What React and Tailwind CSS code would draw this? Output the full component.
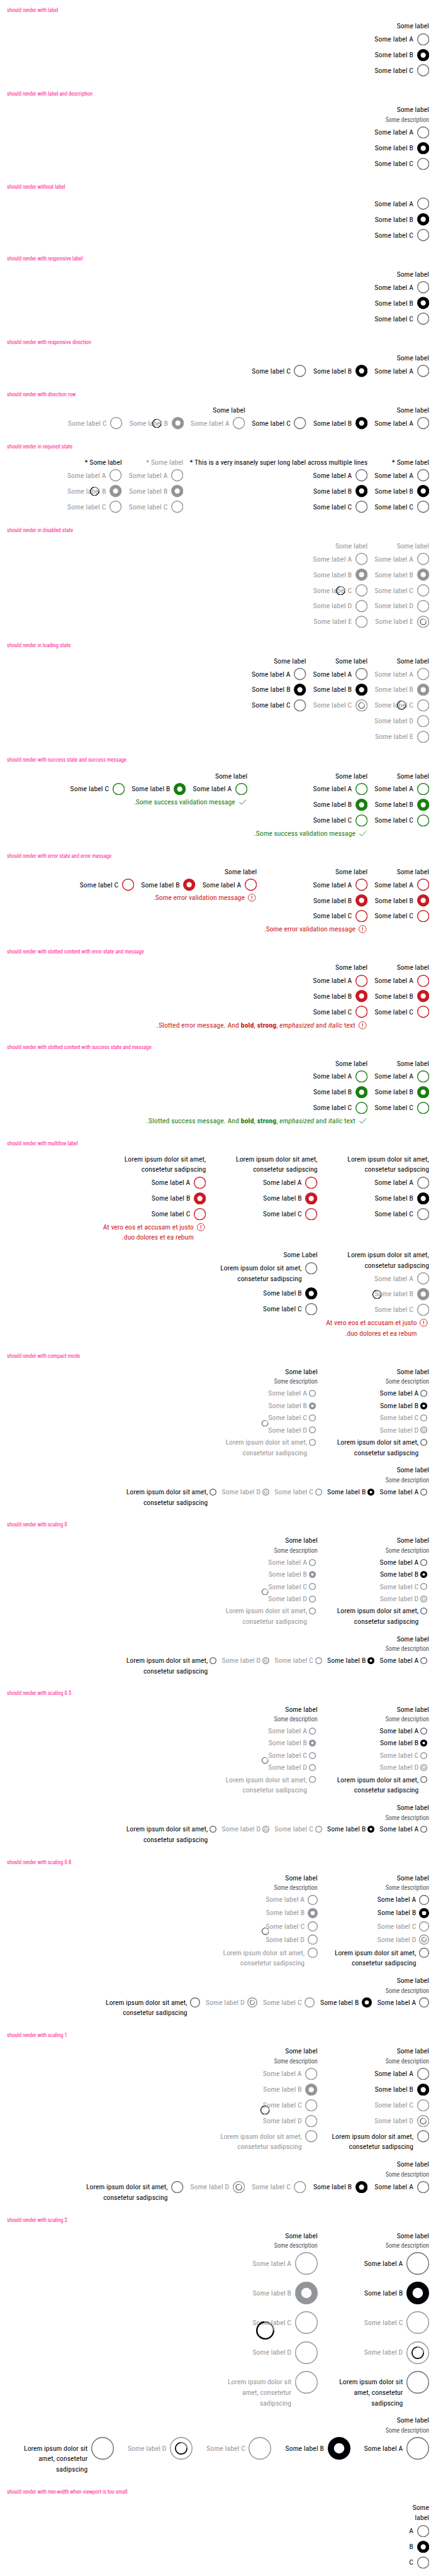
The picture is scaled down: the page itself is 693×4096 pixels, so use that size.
import React from "react";

const LOREM = "Lorem ipsum dolor sit amet, consetetur sadipscing";
const GRAY = "#949598";

/* Geometry of each scaling step; diameter is in design pixels. */
const SCALES = {
  compact: { d: 16, cell: "size-6", svg: "size-4", inner: "gap-0", pad: "", col: "gap-1", row: "gap-2", head: "gap-1", spin: 15, spinCls: "size-[10.4px]" },
  small: { d: 16, cell: "size-6", svg: "size-4", inner: "gap-0", pad: "", col: "gap-1", row: "gap-2", head: "gap-[2.5px]", spin: 15, spinCls: "size-[10.4px]" },
  medium: { d: 23.2, cell: "h-6 w-[16.07px]", svg: "size-[16.07px]", inner: "gap-[4.43px]", pad: "", col: "gap-[4.43px]", row: "gap-[8.87px]", head: "gap-1", spin: 16.8, spinCls: "size-[11.6px]" },
  base: { d: 28, cell: "size-7", svg: "size-7", inner: "gap-2", pad: "pt-0.5", col: "gap-2", row: "gap-4", head: "gap-1", spin: 21, spinCls: "size-[14.55px]" },
  large: { d: 52, cell: "size-13", svg: "size-13", inner: "gap-2", pad: "pt-3.5", col: "gap-4", row: "gap-8", head: "gap-1", spin: 42, spinCls: "size-[29.1px]" },
};

function Arcs({ c, r, w }) {
  const sx = c - r * 0.12;
  const sy = c - r * 0.993;
  return (
    <g fill="none" strokeWidth={w}>
      <path d={`M${sx} ${sy}A${r} ${r} 0 0 1 ${c + r} ${c}`} stroke="#6b6d70" />
      <path d={`M${c + r} ${c}A${r} ${r} 0 1 1 ${sx} ${sy}`} stroke="#010205" />
    </g>
  );
}

function Spinner({ scale }) {
  const { spin, spinCls } = SCALES[scale];
  const w = spin / 12;
  return (
    <span className="absolute inset-0 flex items-center justify-center">
      <svg viewBox={`0 0 ${spin} ${spin}`} className={spinCls}>
        <Arcs c={spin / 2} r={spin / 2 - w / 2} w={w} />
      </svg>
    </span>
  );
}

function Radio({ scale, checked, muted, loading, state }) {
  const { d, cell, svg } = SCALES[scale];
  const s = (d - 4) / 24;
  const c = d / 2;
  const accent = state === "error" ? "#cc1922" : state === "success" ? "#197e10" : null;
  const stroke = muted ? GRAY : accent || "#6b6d70";
  const fill = muted ? GRAY : accent || "#010205";
  return (
    <span className={`${cell} flex shrink-0 items-center justify-center`}>
      <svg viewBox={`0 0 ${d} ${d}`} className={svg}>
        {checked ? (
          <>
            <circle cx={c} cy={c} r={c} fill={fill} />
            <circle cx={c} cy={c} r={6 * s} fill="#fbfcff" />
          </>
        ) : (
          <circle cx={c} cy={c} r={c - 1} fill="none" stroke={stroke} strokeWidth="2" />
        )}
        {loading && <Arcs c={c} r={6.6 * s} w={1.3 * s} />}
      </svg>
    </span>
  );
}

function Message({ state, children }) {
  const color = state === "error" ? "text-[#cc1922]" : "text-[#197e10]";
  return (
    <div className={`flex gap-1 tracking-normal whitespace-nowrap ${color}`}>
      <svg viewBox="0 0 24 24" className="size-6 shrink-0" fill="none" stroke="currentColor" strokeWidth="1.3">
        {state === "error" ? (
          <>
            <circle cx="12" cy="12" r="8.4" />
            <path d="M12 7.3v6" strokeWidth="1.6" />
            <path d="M12 14.9v1.7" strokeWidth="1.6" />
          </>
        ) : (
          <path d="M5 12.4l4.6 5L20.3 6.7" />
        )}
      </svg>
      <span>{children}</span>
    </div>
  );
}

function Group({
  label = "Some label",
  desc,
  items = "ABC",
  texts = {},
  scale = "base",
  row,
  required,
  disabled,
  busy,
  mutedItems = "",
  loadingItems = "",
  state,
  message,
  prefix = "Some label ",
  width = "w-[86.6px]",
}) {
  const g = SCALES[scale];
  return (
    <div className={`flex flex-col ${g.head} ${width}`}>
      {label && (
        <div>
          <div className={disabled ? "text-[#949598]" : ""}>
            {label}
            {required && "\u00a0*"}
          </div>
          {desc && (
            <div className="text-[10.15px] leading-5.5 tracking-[-0.004em] text-[#535457]">Some description</div>
          )}
        </div>
      )}
      <div className={`relative flex ${row ? `flex-row ${g.row}` : `flex-col ${g.col}`}`}>
        {items.split("").map((k) => {
          const loading = loadingItems.includes(k);
          const muted = disabled || busy || loading || mutedItems.includes(k);
          return (
            <div key={k} className={`flex max-w-60 items-start ${g.inner} ${muted ? "text-[#949598]" : ""}`}>
              <Radio scale={scale} checked={k === "B"} muted={muted} loading={loading} state={state} />
              <span className={`${g.pad} ${texts[k] ? "max-w-[141.5px]" : prefix ? "tracking-[0.011em] whitespace-nowrap" : ""}`}>
                {texts[k] || prefix + k}
              </span>
            </div>
          );
        })}
        {busy && <Spinner scale={scale} />}
      </div>
      {message && <Message state={state}>{message}</Message>}
    </div>
  );
}

function Section({ title, children }) {
  return (
    <section className="p-4">
      <h2 className="h-4 text-[8.7px] leading-4 tracking-[-0.002em] text-[#ff1493]">{title}</h2>
      <div dir="rtl" className="mt-4 flex flex-wrap gap-4">
        {children}
      </div>
    </section>
  );
}

function ScaleSection({ title, scale }) {
  const texts = { E: LOREM };
  const shared = { desc: true, items: "ABCDE", texts, scale };
  return (
    <Section title={title}>
      <Group {...shared} width="w-60" mutedItems="C" loadingItems="D" />
      <Group {...shared} width="w-60" busy />
      <Group {...shared} width="w-full" row mutedItems="C" loadingItems="D" />
    </Section>
  );
}

const slotted = (kind) => (
  <span className="tracking-[0.009em]">
    Slotted {kind} message. And <b>bold</b>, <strong>strong</strong>, <em>emphasized</em> and <i>italic</i> text.
  </span>
);

const VERO = (
  <>
    At vero eos et accusam et justo
    <br />
    duo dolores et ea rebum.
  </>
);

const LONG = (
  <span className="tracking-[0.002em]">This is a very insanely super long label across multiple lines</span>
);

const ROW = "w-[281.2px]";

export default function App() {
  return (
    <main className="min-h-[4096px] w-full overflow-hidden bg-white font-['Roboto_Condensed','Roboto',sans-serif] text-[11.64px] leading-6 tracking-[0.004em] text-[#010205] [--spacing:2.77037px] [font-stretch:80%]">
      <Section title="should render with label">
        <Group />
      </Section>
      <Section title="should render with label and description">
        <Group desc />
      </Section>
      <Section title="should render without label">
        <Group label="" />
      </Section>
      <Section title="should render with responsive label">
        <Group />
      </Section>
      <Section title="should render with responsive direction">
        <Group row width={ROW} />
      </Section>
      <Section title="should render with direction row">
        <Group row width={ROW} />
        <Group row busy width={ROW} />
      </Section>
      <Section title="should render in required state">
        <Group required />
        <Group required label={LONG} width="w-[281.9px] whitespace-nowrap" />
        <Group required disabled />
        <Group required busy />
      </Section>
      <Section title="should render in disabled state">
        <Group disabled items="ABCDE" loadingItems="E" />
        <Group disabled busy items="ABCDE" />
      </Section>
      <Section title="should render in loading state">
        <Group busy items="ABCDE" />
        <Group loadingItems="C" />
        <Group />
      </Section>
      <Section title="should render with success state and success message">
        <Group state="success" />
        <Group state="success" message="Some success validation message." width="w-[180px]" />
        <Group state="success" row message="Some success validation message." width={ROW} />
      </Section>
      <Section title="should render with error state and error message">
        <Group state="error" />
        <Group state="error" message="Some error validation message." width="w-[164.9px]" />
        <Group state="error" row message="Some error validation message." width={ROW} />
      </Section>
      <Section title="should render with slotted content with error state and message">
        <Group state="error" />
        <Group state="error" message={slotted("error")} width="w-[380px]" />
      </Section>
      <Section title="should render with slotted content with success state and message">
        <Group state="success" />
        <Group state="success" message={slotted("success")} width="w-[380px]" />
      </Section>
      <Section title="should render with multiline label">
        <Group label={LOREM} width="w-60" />
        <Group label={LOREM} state="error" width="w-60" />
        <Group label={LOREM} state="error" message={VERO} width="w-60" />
        <Group label={LOREM} state="error" busy message={VERO} width="w-60" />
        <Group label="Some Label" texts={{ A: LOREM }} width="w-60" />
      </Section>
      <ScaleSection title="should render with compact mode" scale="compact" />
      <ScaleSection title="should render with scaling 0" scale="small" />
      <ScaleSection title="should render with scaling 0.5" scale="small" />
      <ScaleSection title="should render with scaling 0.8" scale="medium" />
      <ScaleSection title="should render with scaling 1" scale="base" />
      <ScaleSection title="should render with scaling 2" scale="large" />
      <Section title="should render with min-width when viewport is too small">
        <Group prefix="" width="w-12" />
      </Section>
    </main>
  );
}
